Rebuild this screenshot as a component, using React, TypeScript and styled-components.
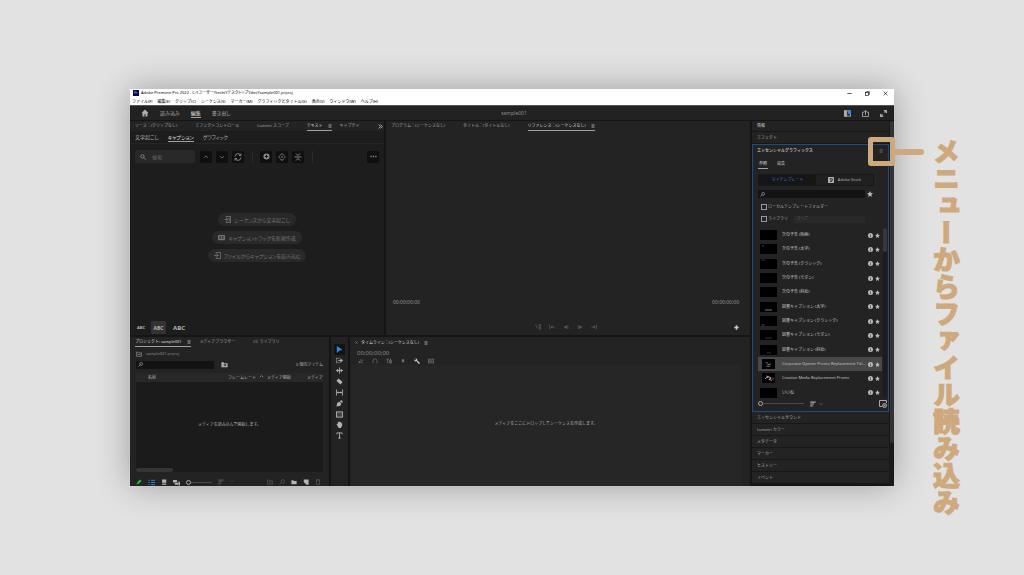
import React from "react";
import styled, { createGlobalStyle, css } from "styled-components";

const Global = createGlobalStyle`
  * { box-sizing: border-box; }
  body { margin: 0; background: #e2e2e2; }
  body, button, input, select {
    font-family: "Noto Sans", "Noto Sans CJK JP", sans-serif;
    font-size: 4px;
    line-height: 8px;
  }
  button { border: 0; padding: 0; margin: 0; background: none; color: inherit; white-space: nowrap; }
  svg { display: block; flex: none; }
  ul { list-style: none; margin: 0; padding: 0; }
`;

const Page = styled.main`
  min-height: 100vh;
  display: grid;
  grid-template-columns: 130px minmax(0, 1fr) 130px;
  background: #e2e2e2;
`;

const Window = styled.section`
  grid-column: 2;
  margin: 89px 0;
  display: flex;
  flex-direction: column;
  background: #151515;
  color: #b0b0b0;
  box-shadow: 0 0 32px rgba(0, 0, 0, 0.3);
`;

const Caption = styled.h1`
  grid-column: 3;
  justify-self: start;
  margin: 138px 0 0 38px;
  writing-mode: vertical-rl;
  font-family: "Noto Sans CJK JP", sans-serif;
  font-size: 27px;
  line-height: 28px;
  font-weight: 900;
  color: #cfa97e;
  -webkit-text-stroke: 1px #cfa97e;
  white-space: nowrap;
`;

const TitleBar = styled.header`
  background: #fff;
  color: #000;
  height: 8px;
  padding: 0 6px 0 3px;
  display: flex;
  align-items: center;
  gap: 2px;
  font-feature-settings: "palt";
`;
const AppBadge = styled.span`
  width: 6px;
  height: 6px;
  background: #00005b;
  color: #b9b9ff;
  line-height: 6px;
  text-align: center;
`;
const WindowButtons = styled.div`
  margin-left: auto;
  display: flex;
  gap: 13px;
`;
const MenuBar = styled.nav`
  background: #fff;
  color: #000;
  height: 8px;
  padding: 1px 2px 0;
  display: flex;
  align-items: center;
  gap: 5px;
  font-feature-settings: "palt";
`;
const AppBar = styled.header`
  height: 15px;
  background: #222;
  display: grid;
  grid-template-columns: 1fr auto 1fr;
  align-items: center;
  padding: 0 7px 0 11px;
  border-top: 1px solid #555;
`;
const DocumentName = styled.span`
  font-size: 5px;
  color: #8c8c8c;
`;
const Cluster = styled.div<{ $gap: number; $end?: boolean }>`
  display: flex;
  align-items: center;
  gap: ${(p) => p.$gap}px;
  ${(p) => p.$end && "justify-content: flex-end;"}
`;

const TabButton = styled.button<{ $on?: boolean; $big?: boolean }>`
  display: flex;
  align-items: center;
  gap: 5px;
  height: 9px;
  border-bottom: 1px solid ${(p) => (p.$on ? "#a0a0a0" : "transparent")};
  color: ${(p) => (p.$on ? "#dcdcdc" : "#a4a4a4")};
  ${(p) => p.$big && css`
    height: 10px;
    font-size: 5px;
    font-feature-settings: "palt";
    color: ${p.$on ? "#e0e0e0" : "#b0b0b0"};
  `}
`;

const Body = styled.div`
  flex: 1;
  min-height: 0;
  display: grid;
  grid-template-columns: minmax(0, 1fr) 142px;
  gap: 2px;
  margin-top: 1px;
`;
const Workspace = styled.div`
  display: grid;
  grid-template-rows: 214px minmax(0, 1fr);
  gap: 2px;
`;
const Upper = styled.div`
  display: grid;
  grid-template-columns: 254fr 364fr;
  gap: 2px;
`;
const Lower = styled.div`
  display: grid;
  grid-template-columns: 199px 17px minmax(0, 1fr);
  gap: 2px;
  min-height: 0;
`;
const Panel = styled.section<{ $dark?: boolean }>`
  background: ${(p) => (p.$dark ? "#1d1d1d" : "#232323")};
  display: flex;
  flex-direction: column;
  min-width: 0;
  min-height: 0;
  overflow: hidden;
`;
const TabBar = styled.div<{ $gap?: number }>`
  height: 10px;
  flex: none;
  background: #232323;
  display: flex;
  align-items: center;
  gap: ${(p) => p.$gap ?? 18}px;
  padding: 1px 3px 0 5px;
`;
const TimelineName = styled.h2`
  margin: 0;
  display: flex;
  align-items: center;
  gap: 5px;
  font-size: 4px;
  font-weight: 400;
  color: #dcdcdc;
`;
const Push = styled.span`
  margin-left: auto;
`;
const SubTabs = styled.div`
  display: flex;
  gap: 9px;
  height: 13px;
  align-items: center;
  padding: 0 5px;
  border-bottom: 1px solid #252525;
`;
const ToolRow = styled.div`
  display: flex;
  align-items: center;
  gap: 4px;
  padding: 6px 5px 0;
`;
const SearchField = styled.label`
  display: flex;
  align-items: center;
  gap: 6px;
  width: 60px;
  height: 13px;
  padding: 0 5px;
  margin-right: 1px;
  background: #292929;
  border-radius: 2px;
  color: #999;
`;
const BareInput = styled.input`
  min-width: 0;
  flex: 1;
  border: 0;
  padding: 0;
  background: transparent;
  color: #999;
  font-size: 5px;
  outline: 0;
  &::placeholder { color: #666; opacity: 1; }
`;
const SquareButton = styled.button`
  width: 12px;
  height: 12px;
  border-radius: 2px;
  background: #0f0f0f;
  color: #8a8a8a;
  display: grid;
  place-items: center;
`;
const Separator = styled.i`
  width: 1px;
  height: 12px;
  margin: 0 3px 0 4px;
  background: #2b2b2b;
`;
const Choices = styled.div`
  flex: 1;
  display: flex;
  flex-direction: column;
  align-items: center;
  gap: 5px;
  padding-top: 50px;
`;
const Pill = styled.button`
  height: 13px;
  padding: 0 6px;
  border-radius: 7px;
  background: #292929;
  color: #757575;
  font-size: 5px;
  font-feature-settings: "palt";
  display: flex;
  align-items: center;
  gap: 3px;
`;
const SizeRow = styled.div`
  display: flex;
  align-items: center;
  gap: 6px;
  padding: 0 7px 1px;
`;
const SizeButton = styled.button<{ $size: number; $on?: boolean }>`
  font-size: ${(p) => p.$size}px;
  font-weight: 700;
  color: #b4b4b4;
  height: 13px;
  min-width: 8px;
  ${(p) => p.$on && css`width: 15px; margin-right: 1px; background: #333; border-radius: 1px;`}
`;

const Monitor = styled.div`
  flex: 1;
  display: flex;
  flex-direction: column;
  justify-content: flex-end;
  padding: 0 11px 5px 7px;
`;
const Spread = styled.div`
  display: flex;
  justify-content: space-between;
  font-size: 5px;
  color: #959595;
`;
const Transport = styled.div`
  display: grid;
  grid-template-columns: 1fr auto 1fr;
  align-items: center;
  padding-top: 18px;
  color: #5c5c5c;
  > :last-child { justify-self: end; color: #ccc; }
`;

const PathRow = styled.div`
  display: flex;
  align-items: center;
  gap: 4px;
  height: 11px;
  padding: 3px 6px 0;
  color: #8c8c8c;
`;
const FilterRow = styled.div`
  display: flex;
  align-items: center;
  gap: 7px;
  height: 13px;
  padding: 0 6px;
`;
const DarkSearch = styled.label`
  display: flex;
  align-items: center;
  gap: 2px;
  height: 8px;
  flex: 0 1 auto;
  width: 78px;
  padding: 0 2px;
  background: #131313;
  color: #aaa;
`;
const Bin = styled.table`
  margin: 2px 6px 0;
  width: calc(100% - 12px);
  border-collapse: collapse;
  table-layout: fixed;
  background: #1b1b1b;
  th {
    height: 9px;
    padding: 0;
    background: #282828;
    text-align: left;
    font-weight: 400;
    white-space: nowrap;
    overflow: hidden;
    color: #b4b4b4;
  }
  td { height: 86px; padding: 0; text-align: center; color: #b0b0b0; }
`;
const HeadCell = styled.th<{ $w?: number }>`
  ${(p) => p.$w && `width: ${p.$w}px;`}
  svg { display: inline-block; margin-left: 3px; }
`;
const HScroll = styled.div`
  margin: 0 6px;
  background: #1b1b1b;
  &::before {
    content: "";
    display: block;
    width: 37px;
    height: 4px;
    border-radius: 2px;
    background: #353535;
  }
`;
const BinFooter = styled.div`
  display: flex;
  align-items: center;
  gap: 6px;
  height: 8px;
  margin-top: 6px;
  padding: 0 8px 0 6px;
  color: #b5b5b5;
`;
const Dim = styled.span`
  display: flex;
  gap: 6px;
  color: #555;
`;
const Range = styled.input<{ $w: number }>`
  appearance: none;
  width: ${(p) => p.$w}px;
  height: 5px;
  margin: 0;
  background: linear-gradient(#4a4a4a, #4a4a4a) center / 100% 1px no-repeat;
  &::-webkit-slider-thumb {
    appearance: none;
    width: 5px;
    height: 5px;
    border: 1px solid #aaa;
    border-radius: 50%;
    background: #232323;
  }
`;
const Tools = styled.div`
  display: grid;
  grid-auto-rows: 1fr;
  height: 97px;
  margin-top: 7px;
  justify-content: center;
  color: #b4b4b4;
`;
const Tool = styled.button<{ $on?: boolean }>`
  width: 11px;
  display: grid;
  place-items: center;
  ${(p) => p.$on && "background: #131313; color: #2d8ceb;"}
`;
const TimeHead = styled.div`
  padding: 2px 7px 0;
  height: 18px;
`;
const TimeCode = styled.div`
  font-size: 6px;
  color: #888;
`;
const TimeButtons = styled.div`
  display: flex;
  gap: 8px;
  padding: 1px 0 0 1px;
  color: #6e6e6e;
  > :nth-child(5) { color: #ccc; }
`;
const DropZone = styled.div`
  flex: 1;
  margin: 0 9px 0 1px;
  padding-bottom: 4px;
  background: #262626;
  display: grid;
  place-items: center;
  color: #b0b0b0;
`;

const Side = styled.aside`
  display: grid;
  grid-template-columns: minmax(0, 1fr) 5px;
  min-height: 0;
`;
const Stack = styled.div`
  display: flex;
  flex-direction: column;
  min-height: 0;
  min-width: 0;
`;
const SideScroll = styled.div`
  background: #1a1a1a;
  &::before {
    content: "";
    display: block;
    height: 322px;
    margin-left: 1px;
    border-radius: 2px;
    background: #333;
  }
`;
const Fold = styled.button<{ $first?: boolean }>`
  height: ${(p) => (p.$first ? 11 : 12)}px;
  flex: 0 1 auto;
  padding: 0 5px;
  border-bottom: 1px solid #171717;
  background: #232323;
  color: ${(p) => (p.$first ? "#c8c8c8" : "#a8a8a8")};
  text-align: left;
`;
const Essential = styled.section`
  border: 1px solid #1f4c78;
  background: #232323;
  padding: 0 1px 0 5px;
`;
const EssentialHead = styled.header`
  position: relative;
  display: flex;
  align-items: center;
  justify-content: space-between;
  height: 11px;
  padding-right: 4px;
  margin-left: -1px;
  color: #8c8c8c;
`;
const EssentialName = styled.h2`
  margin: 0;
  font-size: 4px;
  font-weight: 500;
  color: #dcdcdc;
`;
const Marker = styled.div`
  position: absolute;
  right: -8px;
  top: -8px;
  width: 27px;
  height: 29px;
  border: 5px solid #cfa97e;
  border-radius: 3px;
  &::after {
    content: "";
    position: absolute;
    left: 20px;
    top: 7px;
    width: 31px;
    height: 6px;
    border-radius: 0 3px 3px 0;
    background: #cfa97e;
  }
`;
const EssentialTab = styled(TabButton)`
  margin-top: 4px;
  padding: 0 1px;
`;
const Segments = styled.div`
  display: grid;
  grid-template-columns: 1fr 1fr;
  height: 12px;
  margin: 5px 13px 0 0;
  border: 1px solid #191919;
`;
const Segment = styled.button<{ $on?: boolean }>`
  display: flex;
  align-items: center;
  justify-content: center;
  gap: 4px;
  background: ${(p) => (p.$on ? "#161616" : "#202020")};
  color: ${(p) => (p.$on ? "#2f83d6" : "#b0b0b0")};
`;
const EssentialSearch = styled.div`
  display: flex;
  align-items: center;
  gap: 2px;
  margin-top: 4px;
  padding-right: 14px;
  color: #bbb;
  > label { flex: 1; }
`;
const Checks = styled.div`
  padding-top: 3px;
`;
const CheckRow = styled.div`
  display: flex;
  align-items: center;
  gap: 1px;
  height: 12px;
  padding: 0 22px 0 3px;
  label { color: #b0b0b0; }
`;
const Check = styled.input`
  appearance: none;
  width: 6px;
  height: 6px;
  margin: 0;
  border: 1px solid #999;
`;
const Select = styled.select`
  flex: 1;
  min-width: 0;
  height: 7px;
  margin-left: 5px;
  padding: 0 3px;
  line-height: 6px;
  border: 0;
  appearance: none;
  background: #292929;
  color: #505050;
`;
const ListWrap = styled.div`
  display: grid;
  grid-template-columns: minmax(0, 1fr) 4px;
  gap: 1px;
  margin-top: 3px;
`;
const Templates = styled.ul`
  height: 172px;
  display: grid;
  grid-auto-rows: 1fr;
`;
const Template = styled.li<{ $on?: boolean }>`
  display: grid;
  grid-template-columns: 17px minmax(0, 1fr) 5px 5px;
  gap: 2px;
  align-items: center;
  padding: 0 2px;
  color: #bbb;
  ${(p) => p.$on && "background: #484848;"}
`;
const Name = styled.span`
  margin-left: 3px;
  overflow: hidden;
  white-space: nowrap;
  text-overflow: ellipsis;
  color: #c4c4c4;
`;
const Thumb = styled.svg<{ $narrow?: boolean }>`
  background: #000;
  width: ${(p) => (p.$narrow ? 13 : 17)}px;
  height: 10px;
  justify-self: center;
`;
const ListScroll = styled.div`
  background: #1c1c1c;
  height: 169px;
  &::before {
    content: "";
    display: block;
    height: 24px;
    border-radius: 2px;
    background: #383838;
  }
`;
const EssentialFoot = styled.footer`
  display: flex;
  align-items: center;
  gap: 4px;
  height: 11px;
  padding-bottom: 4px;
  color: #aaa;
`;
const SortMenu = styled.button`
  display: flex;
  align-items: center;
  gap: 3px;
  margin-left: 2px;
`;

const paths: Record<string, React.ReactNode> = {
  home: <path d="M8 1 1 8h2v7h4v-5h2v5h4V8h2z" fill="currentColor" stroke="none" />,
  search: <><circle cx="6.5" cy="6.5" r="4.5" /><path d="m10 10 5 5" /></>,
  lens: <><circle cx="10" cy="6" r="4.5" /><path d="m7 9-6 6" /></>,
  up: <path d="m3 10 5-5 5 5" />,
  down: <path d="m3 6 5 5 5-5" />,
  sync: <><path d="M2 7a6 6 0 0 1 11-3M14 9a6 6 0 0 1-11 3" /><path d="M14 1v4h-4M2 15v-4h4" /></>,
  plusDisc: <><circle cx="8" cy="8" r="7" fill="currentColor" stroke="none" /><path d="M8 4v8M4 8h8" stroke="#0f0f0f" /></>,
  split: <path d="M1 8h3M12 8h3M6 8h4M4 5l4-4 4 4M4 11l4 4 4-4" />,
  merge: <path d="M1 8h14M4 1l4 4 4-4M4 15l4-4 4 4" />,
  dots: <path d="M1 8h3M6.5 8h3M12 8h3" strokeWidth="3" />,
  menu: <path d="M2 3h12M2 8h12M2 13h12" />,
  more: <path d="m2 2 6 6-6 6M8 2l6 6-6 6" strokeWidth="3" />,
  doc: <><path d="M5 1h10v14H5V11M5 5V1M1 8h7M6 5l3 3-3 3" /><path d="M10 5h3M11 8h2M10 11h3" /></>,
  enter: <path d="M5 5V1h10v14H5v-4M0 8h10M7 5l3 3-3 3" />,
  cc: <><rect x="0" y="2" width="16" height="12" rx="2" fill="currentColor" stroke="none" /><path d="M7 6H4v4h3M13 6h-3v4h3" stroke="#292929" /></>,
  min: <path d="M1 8h14" />,
  restore: <><rect x="2" y="5" width="9" height="9" /><path d="M5 4V2h9v9h-2" /></>,
  close: <path d="m2 2 12 12M14 2 2 14" />,
  layout: <><rect x="1" y="2" width="14" height="12" /><path d="M1 2h5v12H1z" fill="currentColor" /><path d="M9 2h7v7H9z" fill="#2d8ceb" stroke="none" /></>,
  share: <path d="M5 5H1v10h14V5h-4M8 11V1M5 4l3-3 3 3" />,
  expand: <path d="M9 1h6v6zM1 9v6h6zM15 1l-5 5M1 15l5-5" fill="currentColor" />,
  star: <path d="m8 0 2.3 5.5 5.7.5-4.400 3.800L13 16l-5-3.400L3 16l1.400-6.200L0 6l5.700-.5z" fill="currentColor" stroke="none" />,
  info: <><circle cx="8" cy="8" r="8" fill="currentColor" stroke="none" /><path d="M8 7v6M8 3v2" stroke="#222" /></>,
  stock: <><rect x="0" y="0" width="16" height="16" rx="2" fill="currentColor" stroke="none" /><path d="M10 4H6v4h4v4H5M12 4v5" stroke="#222" /></>,
  sort: <path d="M1 3h14M1 8h10M1 13h6" strokeWidth="3" />,
  addItem: <><path d="M6 13H1V1h14v5" /><circle cx="11" cy="11" r="4" /><path d="M11 9v4M9 11h4" /></>,
  folder: <path d="M1 3h5l2 2h7v9H1z" fill="currentColor" stroke="none" />,
  folderLens: <><path d="M1 3h5l2 2h7v9H1z" fill="currentColor" stroke="none" /><circle cx="9" cy="9" r="2" stroke="#222" /></>,
  bin: <><path d="M1 3h5l2 2h7v9H1z" /><path d="M4 9h8" /></>,
  pen: <path d="m1 15 3-7 7-7 4 4-7 7z" fill="#1fbf3a" stroke="none" />,
  list: <path d="M1 3h3M1 8h3M1 13h3M7 3h9M7 8h9M7 13h9" stroke="#2d8ceb" />,
  icons: <path d="M3 1h11v9H3zM3 12h11v3H3z" fill="currentColor" stroke="none" />,
  free: <path d="M0 2h9v6H0zM4 9h8v4H4zM10 6h6v9h-3V8h-3z" fill="currentColor" stroke="none" />,
  newItem: <path d="M2 1h13v14h-6l-7-7z" fill="currentColor" stroke="none" />,
  trash: <path d="M2 3h12M4 3v12h8V3M6 3V1h4v2" />,
  select: <path d="m2 0 13 9-7 1-6 6z" fill="currentColor" stroke="none" />,
  track: <><path d="M1 3h7M1 13h7M1 3v10" strokeDasharray="2 1" /><path d="M5 8h6" /><path d="m10 3 6 5-6 5z" fill="currentColor" stroke="none" /></>,
  ripple: <><path d="M8 1v14M1 8h14" /><path d="M0 8l5-4v8zM16 8l-5-4v8z" fill="currentColor" stroke="none" /></>,
  razor: <path d="m1 6 5-5 9 8-5 6z" fill="currentColor" stroke="none" />,
  slip: <><path d="M1 1v14M15 1v14M3 8h10" /><path d="m2 8 4-3v6zM14 8l-4-3v6z" fill="currentColor" stroke="none" /></>,
  nib: <path d="m1 15 2-9 5-2 4 4-2 5zM9 3l3-3 4 4-3 3z" fill="currentColor" stroke="none" />,
  rect: <rect x="1" y="2" width="14" height="12" fill="#444" />,
  hand: <path d="M1 7l2-1 1 2V3h2V1h2v1h2v1h2v2h2v6l-3 5H6z" fill="currentColor" stroke="none" />,
  type: <path d="M2 5V2h12v3M8 2v12M5 14h6" />,
  insert: <path d="M1 1l5 8M4 9l3 2M11 2h4v4h-4zM11 9h4v5h-4z" />,
  toIn: <><path d="M2 2v12M6 8h9" /><path d="m4 8 5-4v8z" fill="currentColor" stroke="none" /></>,
  back: <><path d="M13 3v10" /><path d="m2 8 8-5v10z" fill="currentColor" stroke="none" /></>,
  step: <><path d="M3 3v10" /><path d="m14 8-8-5v10z" fill="currentColor" stroke="none" /></>,
  toOut: <><path d="M14 2v12M1 8h9" /><path d="m12 8-5-4v8z" fill="currentColor" stroke="none" /></>,
  plus: <path d="M8 1v14M1 8h14" strokeWidth="5" />,
  nest: <path d="M1 11h6M4 8v6M8 3v11M12 5v3M12 11v3" />,
  snap: <path d="M3 14V7a5 5 0 0 1 10 0v7" />,
  link: <path d="M1 3h7M4 3v11M9 6h6v7H9zM12 1v14" />,
  mark: <path d="M5 3h6v6l-3 4-3-4z" fill="currentColor" stroke="none" />,
  wrench: <path d="m6 1-3 0 3 3-2 2-3-3v4l3 2 2-1 7 8 3-3-8-7 1-2z" fill="currentColor" stroke="none" />,
  capt: <><rect x="1" y="3" width="14" height="10" /><path d="M7 6H4v4h3M12 6H9v4h3" /></>,
};
const Icon = ({ name, size = 6 }: { name: string; size?: number }) => (
  <svg width={size} height={size} viewBox="0 0 16 16" fill="none" stroke="currentColor" strokeWidth={2} aria-hidden="true">
    {paths[name]}
  </svg>
);

const menus = ["ファイル(F)", "編集(E)", "クリップ(C)", "シーケンス(S)", "マーカー(M)", "グラフィックとタイトル(G)", "表示(V)", "ウィンドウ(W)", "ヘルプ(H)"];
const templates = [
  "次の予告 (映画)", "次の予告 (太字)", "次の予告 (クラシック)", "次の予告 (モダン)", "次の予告 (斜め)",
  "図書キャプション (太字)", "図書キャプション (クラシック)", "図書キャプション (モダン)", "図書キャプション (斜め)",
  "Corporate Opener Promo Replacement Titles", "Creative Media Replacement Promo", "いいね",
];
const tools = ["select", "track", "ripple", "razor", "slip", "nib", "rect", "hand", "type"];
const folds = ["エッセンシャルサウンド", "Lumetri カラー", "メタデータ", "マーカー", "ヒストリー", "イベント"];

function TemplateThumb({ index }: { index: number }) {
  return (
    <Thumb viewBox="0 0 17 10" $narrow={index === 9 || index === 10} aria-hidden="true">
      {index === 1 && <path d="M2 2h2" stroke="#444" />}
      {index === 2 && <path d="M1 1h4" stroke="#233c55" />}
      {index === 5 && <path d="M5 8h7" stroke="#777" />}
      {index === 6 && <path d="M1 9h4" stroke="#24466a" />}
      {index === 7 && <path d="M5 8h7" stroke="#2c3a55" />}
      {index === 8 && <path d="M7 8h4" stroke="#333" />}
      {index === 9 && <path d="M5 3l3 1M7 6l5-1M6 8h5" stroke="#999" />}
      {index === 10 && <><path d="M4 6l4-3 4 2-3 2 4 1M6 2l2 3" stroke="#ddd" fill="none" /><path d="M13 4h3v4h-3z" fill="#601620" /></>}
    </Thumb>
  );
}

function TextPanel() {
  return (
    <Panel $dark>
      <TabBar>
        <TabButton>ソース：(クリップなし)</TabButton>
        <TabButton>エフェクトコントロール</TabButton>
        <TabButton>Lumetri スコープ</TabButton>
        <Cluster $gap={8}>
          <TabButton $on>テキスト<Icon name="menu" size={4} /></TabButton>
          <TabButton>キャプチャ</TabButton>
        </Cluster>
        <Push><Icon name="more" size={5} /></Push>
      </TabBar>
      <SubTabs>
        <TabButton $big>文字起こし</TabButton>
        <TabButton $big $on>キャプション</TabButton>
        <TabButton $big>グラフィック</TabButton>
      </SubTabs>
      <ToolRow>
        <SearchField><Icon name="search" /><BareInput aria-label="検索" placeholder="検索" /></SearchField>
        <SquareButton aria-label="前へ"><Icon name="up" /></SquareButton>
        <SquareButton aria-label="次へ"><Icon name="down" /></SquareButton>
        <SquareButton aria-label="置換"><Icon name="sync" size={8} /></SquareButton>
        <Separator />
        <SquareButton aria-label="追加"><Icon name="plusDisc" size={7} /></SquareButton>
        <SquareButton aria-label="分割"><Icon name="split" size={8} /></SquareButton>
        <SquareButton aria-label="結合"><Icon name="merge" size={8} /></SquareButton>
        <Separator />
        <Push><SquareButton aria-label="その他"><Icon name="dots" size={7} /></SquareButton></Push>
      </ToolRow>
      <Choices>
        <Pill><Icon name="doc" size={7} />シーケンスから文字起こし</Pill>
        <Pill><Icon name="cc" size={7} />キャプショントラックを新規作成</Pill>
        <Pill><Icon name="enter" size={7} />ファイルからキャプションを読み込む</Pill>
      </Choices>
      <SizeRow>
        <SizeButton $size={4}>ABC</SizeButton>
        <SizeButton $size={5} $on>ABC</SizeButton>
        <SizeButton $size={6}>ABC</SizeButton>
      </SizeRow>
    </Panel>
  );
}

function ProgramPanel() {
  return (
    <Panel>
      <TabBar>
        <TabButton>プログラム：(シーケンスなし)</TabButton>
        <TabButton>タイトル：(タイトルなし)</TabButton>
        <TabButton $on>リファレンス：(シーケンスなし)<Icon name="menu" size={4} /></TabButton>
      </TabBar>
      <Monitor>
        <Spread><span>00;00;00;00</span><span>00;00;00;00</span></Spread>
        <Transport>
          <span />
          <Cluster $gap={8}>
            {["insert", "toIn", "back", "step", "toOut"].map((n) => (
              <button key={n} aria-label={n}><Icon name={n} /></button>
            ))}
          </Cluster>
          <button aria-label="ボタンエディター"><Icon name="plus" size={5} /></button>
        </Transport>
      </Monitor>
    </Panel>
  );
}

function ProjectPanel() {
  return (
    <Panel>
      <TabBar>
        <Cluster $gap={9}>
          <TabButton $on>プロジェクト: sample001<Icon name="menu" size={4} /></TabButton>
          <TabButton>メディアブラウザー</TabButton>
        </Cluster>
        <TabButton>CC ライブラリ</TabButton>
      </TabBar>
      <PathRow><Icon name="bin" />sample001.prproj</PathRow>
      <FilterRow>
        <DarkSearch><Icon name="lens" size={5} /><BareInput aria-label="プロジェクトを検索" /></DarkSearch>
        <button aria-label="検索ビン"><Icon name="folderLens" size={7} /></button>
        <Push>0 個のアイテム</Push>
      </FilterRow>
      <Bin>
        <thead>
          <tr>
            <HeadCell $w={12} aria-label="ラベル" />
            <HeadCell>名前</HeadCell>
            <HeadCell $w={39}>フレームレート<Icon name="up" size={5} /></HeadCell>
            <HeadCell $w={40}>メディア開始</HeadCell>
            <HeadCell $w={16}>メディア</HeadCell>
          </tr>
        </thead>
        <tbody><tr><td colSpan={5}>メディアを読み込んで開始します。</td></tr></tbody>
      </Bin>
      <HScroll />
      <BinFooter>
        <Icon name="pen" /><Icon name="list" size={7} /><Icon name="icons" /><Icon name="free" size={7} />
        <Range type="range" aria-label="サムネールサイズ" $w={26} defaultValue={0} />
        <Dim><Icon name="sort" /><Icon name="down" size={4} /></Dim>
        <Push><Dim><Icon name="bin" /><Icon name="lens" /></Dim></Push>
        <Icon name="folder" /><Icon name="newItem" />
        <Dim><Icon name="trash" /></Dim>
      </BinFooter>
    </Panel>
  );
}

function Timeline() {
  return (
    <Panel>
      <TabBar $gap={3}>
        <Icon name="close" size={3} />
        <TimelineName>タイムライン：(シーケンスなし)<Icon name="menu" size={4} /></TimelineName>
      </TabBar>
      <TimeHead>
        <TimeCode>00;00;00;00</TimeCode>
        <TimeButtons>
          {["nest", "snap", "link", "mark", "wrench", "capt"].map((n) => (
            <button key={n} aria-label={n}><Icon name={n} /></button>
          ))}
        </TimeButtons>
      </TimeHead>
      <DropZone>メディアをここにドロップしてシーケンスを作成します。</DropZone>
    </Panel>
  );
}

function EssentialGraphics() {
  return (
    <Essential>
      <EssentialHead>
        <EssentialName>エッセンシャルグラフィックス</EssentialName>
        <button aria-label="パネルメニュー"><Icon name="menu" size={4} /></button>
        <Marker />
      </EssentialHead>
      <Cluster $gap={8}>
        <EssentialTab $on>参照</EssentialTab>
        <EssentialTab>編集</EssentialTab>
      </Cluster>
      <Segments>
        <Segment $on>マイテンプレート</Segment>
        <Segment><Icon name="stock" />Adobe Stock</Segment>
      </Segments>
      <EssentialSearch>
        <DarkSearch><Icon name="lens" size={5} /><BareInput aria-label="テンプレートを検索" /></DarkSearch>
        <button aria-label="お気に入り"><Icon name="star" /></button>
      </EssentialSearch>
      <Checks>
        <CheckRow><Check type="checkbox" id="local" /><label htmlFor="local">ローカルテンプレートフォルダー</label></CheckRow>
        <CheckRow>
          <Check type="checkbox" id="library" /><label htmlFor="library">ライブラリ</label>
          <Select aria-label="ライブラリ"><option>すべて</option></Select>
        </CheckRow>
      </Checks>
      <ListWrap>
        <Templates>
          {templates.map((t, i) => (
            <Template key={t} $on={i === 9}>
              <TemplateThumb index={i} />
              <Name>{t}</Name>
              <Icon name="info" size={5} />
              <Icon name="star" size={5} />
            </Template>
          ))}
        </Templates>
        <ListScroll />
      </ListWrap>
      <EssentialFoot>
        <Range type="range" aria-label="サムネールサイズ" $w={46} defaultValue={0} />
        <SortMenu aria-label="並べ替え"><Icon name="sort" /><Icon name="down" size={4} /></SortMenu>
        <Push><Icon name="addItem" size={8} /></Push>
      </EssentialFoot>
    </Essential>
  );
}

export default function App() {
  return (
    <Page>
      <Global />
      <Window>
        <TitleBar>
          <AppBadge>Pr</AppBadge>
          <span>Adobe Premiere Pro 2022 - C:¥ユーザー¥teshi¥デスクトップ¥des¥sample001.prproj</span>
          <WindowButtons>
            <button aria-label="最小化"><Icon name="min" size={5} /></button>
            <button aria-label="元に戻す"><Icon name="restore" size={5} /></button>
            <button aria-label="閉じる"><Icon name="close" size={5} /></button>
          </WindowButtons>
        </TitleBar>
        <MenuBar>{menus.map((m) => <button key={m}>{m}</button>)}</MenuBar>
        <AppBar>
          <Cluster $gap={11}>
            <Icon name="home" size={8} />
            <TabButton $big>読み込み</TabButton>
            <TabButton $big $on>編集</TabButton>
            <TabButton $big>書き出し</TabButton>
          </Cluster>
          <DocumentName>sample001</DocumentName>
          <Cluster $gap={11} $end>
            <Icon name="layout" size={7} /><Icon name="share" size={7} /><Icon name="expand" size={7} />
          </Cluster>
        </AppBar>
        <Body>
          <Workspace>
            <Upper><TextPanel /><ProgramPanel /></Upper>
            <Lower>
              <ProjectPanel />
              <Panel>
                <Tools>
                  {tools.map((t, i) => <Tool key={t} $on={i === 0} aria-label={t}><Icon name={t} size={7} /></Tool>)}
                </Tools>
              </Panel>
              <Timeline />
            </Lower>
          </Workspace>
          <Side>
            <Stack>
              <Fold $first>情報</Fold>
              <Fold>エフェクト</Fold>
              <EssentialGraphics />
              {folds.map((f) => <Fold key={f}>{f}</Fold>)}
            </Stack>
            <SideScroll />
          </Side>
        </Body>
      </Window>
      <Caption>メニューからファイル読み込み</Caption>
    </Page>
  );
}
